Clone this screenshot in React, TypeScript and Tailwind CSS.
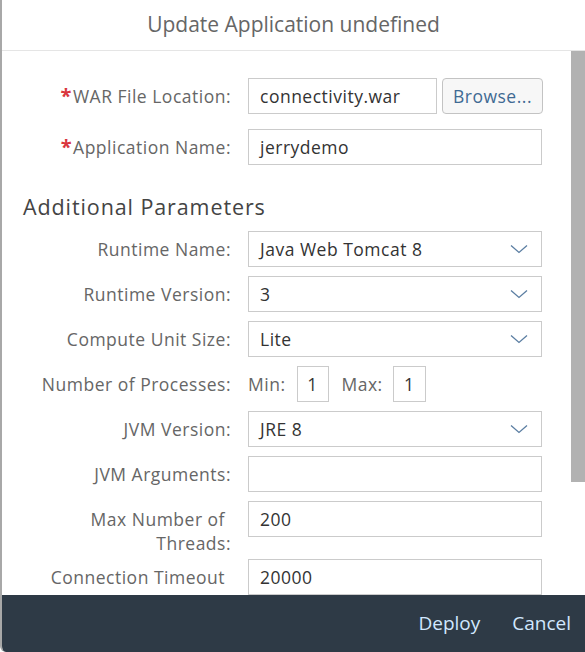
const font = { fontFamily: '"Open Sans", "Noto Sans", Arial, sans-serif' };

function Chevron() {
  return (
    <svg width="18" height="10" viewBox="0 0 18 10" fill="none" className="text-[#5b7ea2]">
      <polyline points="1,1.5 9,8.5 17,1.5" stroke="currentColor" strokeWidth="1.3" />
    </svg>
  );
}

const labelCls = 'w-[208px] shrink-0 text-right text-[17.5px] tracking-[0.5px] leading-[24px] text-[#666]';
const valueCls = 'text-[17.5px] tracking-[0.5px] text-[#333]';

function Label({ children, required }: { children: React.ReactNode; required?: boolean }) {
  return (
    <div className={labelCls}>
      {required && <span className="text-[#d9363e] text-[20px] font-bold mr-[1px]">*</span>}
      {children}
    </div>
  );
}

function TextBox({ value, className = 'w-[294px]' }: { value: string; className?: string }) {
  return (
    <div className={`h-[36px] border border-[#cbcbcb] bg-white flex items-center px-[11px] ${valueCls} ${className}`}>
      {value}
    </div>
  );
}

function SelectBox({ value }: { value: string }) {
  return (
    <div className={`h-[36px] w-[294px] border border-[#cbcbcb] bg-white flex items-center justify-between pl-[11px] pr-[13px] ${valueCls}`}>
      <span>{value}</span>
      <Chevron />
    </div>
  );
}

function Row({ label, required, children }: { label: string; required?: boolean; children: React.ReactNode }) {
  return (
    <div className="flex items-center gap-[17px]">
      <Label required={required}>{label}</Label>
      {children}
    </div>
  );
}

export default function App() {
  return (
    <div style={font} className="w-[585px] h-[652px] bg-white flex flex-col border-l-2 border-[#a8a8a8] rounded-bl-[6px] overflow-hidden">
      <div className="h-[51px] shrink-0 border-b border-[#e5e5e5] flex items-center justify-center text-[21px] text-[#666]">
        Update Application undefined
      </div>

      <div className="flex-1 flex min-h-0">
        <div className="flex-1 overflow-hidden pl-[21px] pt-[27px]">
          <div className="flex flex-col gap-[15px]">
            <Row label="WAR File Location:" required>
              <div className="flex gap-[5px]">
                <TextBox value="connectivity.war" className="w-[189px]" />
                <button className="h-[36px] w-[101px] rounded-[4px] border border-[#c3c3c3] bg-[#f7f7f7] text-[17.5px] tracking-[0.5px] text-[#3f6a93]">
                  Browse...
                </button>
              </div>
            </Row>
            <Row label="Application Name:" required>
              <TextBox value="jerrydemo" />
            </Row>
          </div>

          <div className="mt-[28px] mb-[10px] text-[21.5px] tracking-[0.9px] leading-[28px] text-[#444]">Additional Parameters</div>

          <div className="flex flex-col gap-[9px]">
            <Row label="Runtime Name:">
              <SelectBox value="Java Web Tomcat 8" />
            </Row>
            <Row label="Runtime Version:">
              <SelectBox value="3" />
            </Row>
            <Row label="Compute Unit Size:">
              <SelectBox value="Lite" />
            </Row>
            <Row label="Number of Processes:">
              <div className="flex items-center text-[17.5px] tracking-[0.5px] text-[#666]">
                <span className="mr-[11px]">Min:</span>
                <div className="h-[36px] w-[32px] border border-[#cbcbcb] flex items-center justify-center text-[#333]">1</div>
                <span className="ml-[13px] mr-[10px]">Max:</span>
                <div className="h-[36px] w-[33px] border border-[#cbcbcb] flex items-center justify-center text-[#333]">1</div>
              </div>
            </Row>
            <Row label="JVM Version:">
              <SelectBox value="JRE 8" />
            </Row>
            <Row label="JVM Arguments:">
              <TextBox value="" />
            </Row>
            <div className="flex items-start gap-[17px]">
              <div className={`${labelCls} pt-[6px]`}>
                <span className="block pr-[6px]">Max Number of</span>
                <span className="block">Threads:</span>
              </div>
              <TextBox value="200" />
            </div>
            <div className="flex items-start gap-[17px] -mt-[5px]">
              <div className={`${labelCls} pt-[6px]`}>
                <span className="block pr-[6px]">Connection Timeout</span>
                <span className="block">(ms):</span>
              </div>
              <TextBox value="20000" />
            </div>
          </div>
        </div>

        <div className="w-[14px] shrink-0 flex flex-col">
          <div className="h-[431px] bg-[#b2b2b2]" />
        </div>
      </div>

      <div className="h-[57px] shrink-0 bg-[#2e3a46] flex items-center justify-end gap-[32px] pr-[14px] text-[19px] text-[#d1e8ff]">
        <span>Deploy</span>
        <span>Cancel</span>
      </div>
    </div>
  );
}
